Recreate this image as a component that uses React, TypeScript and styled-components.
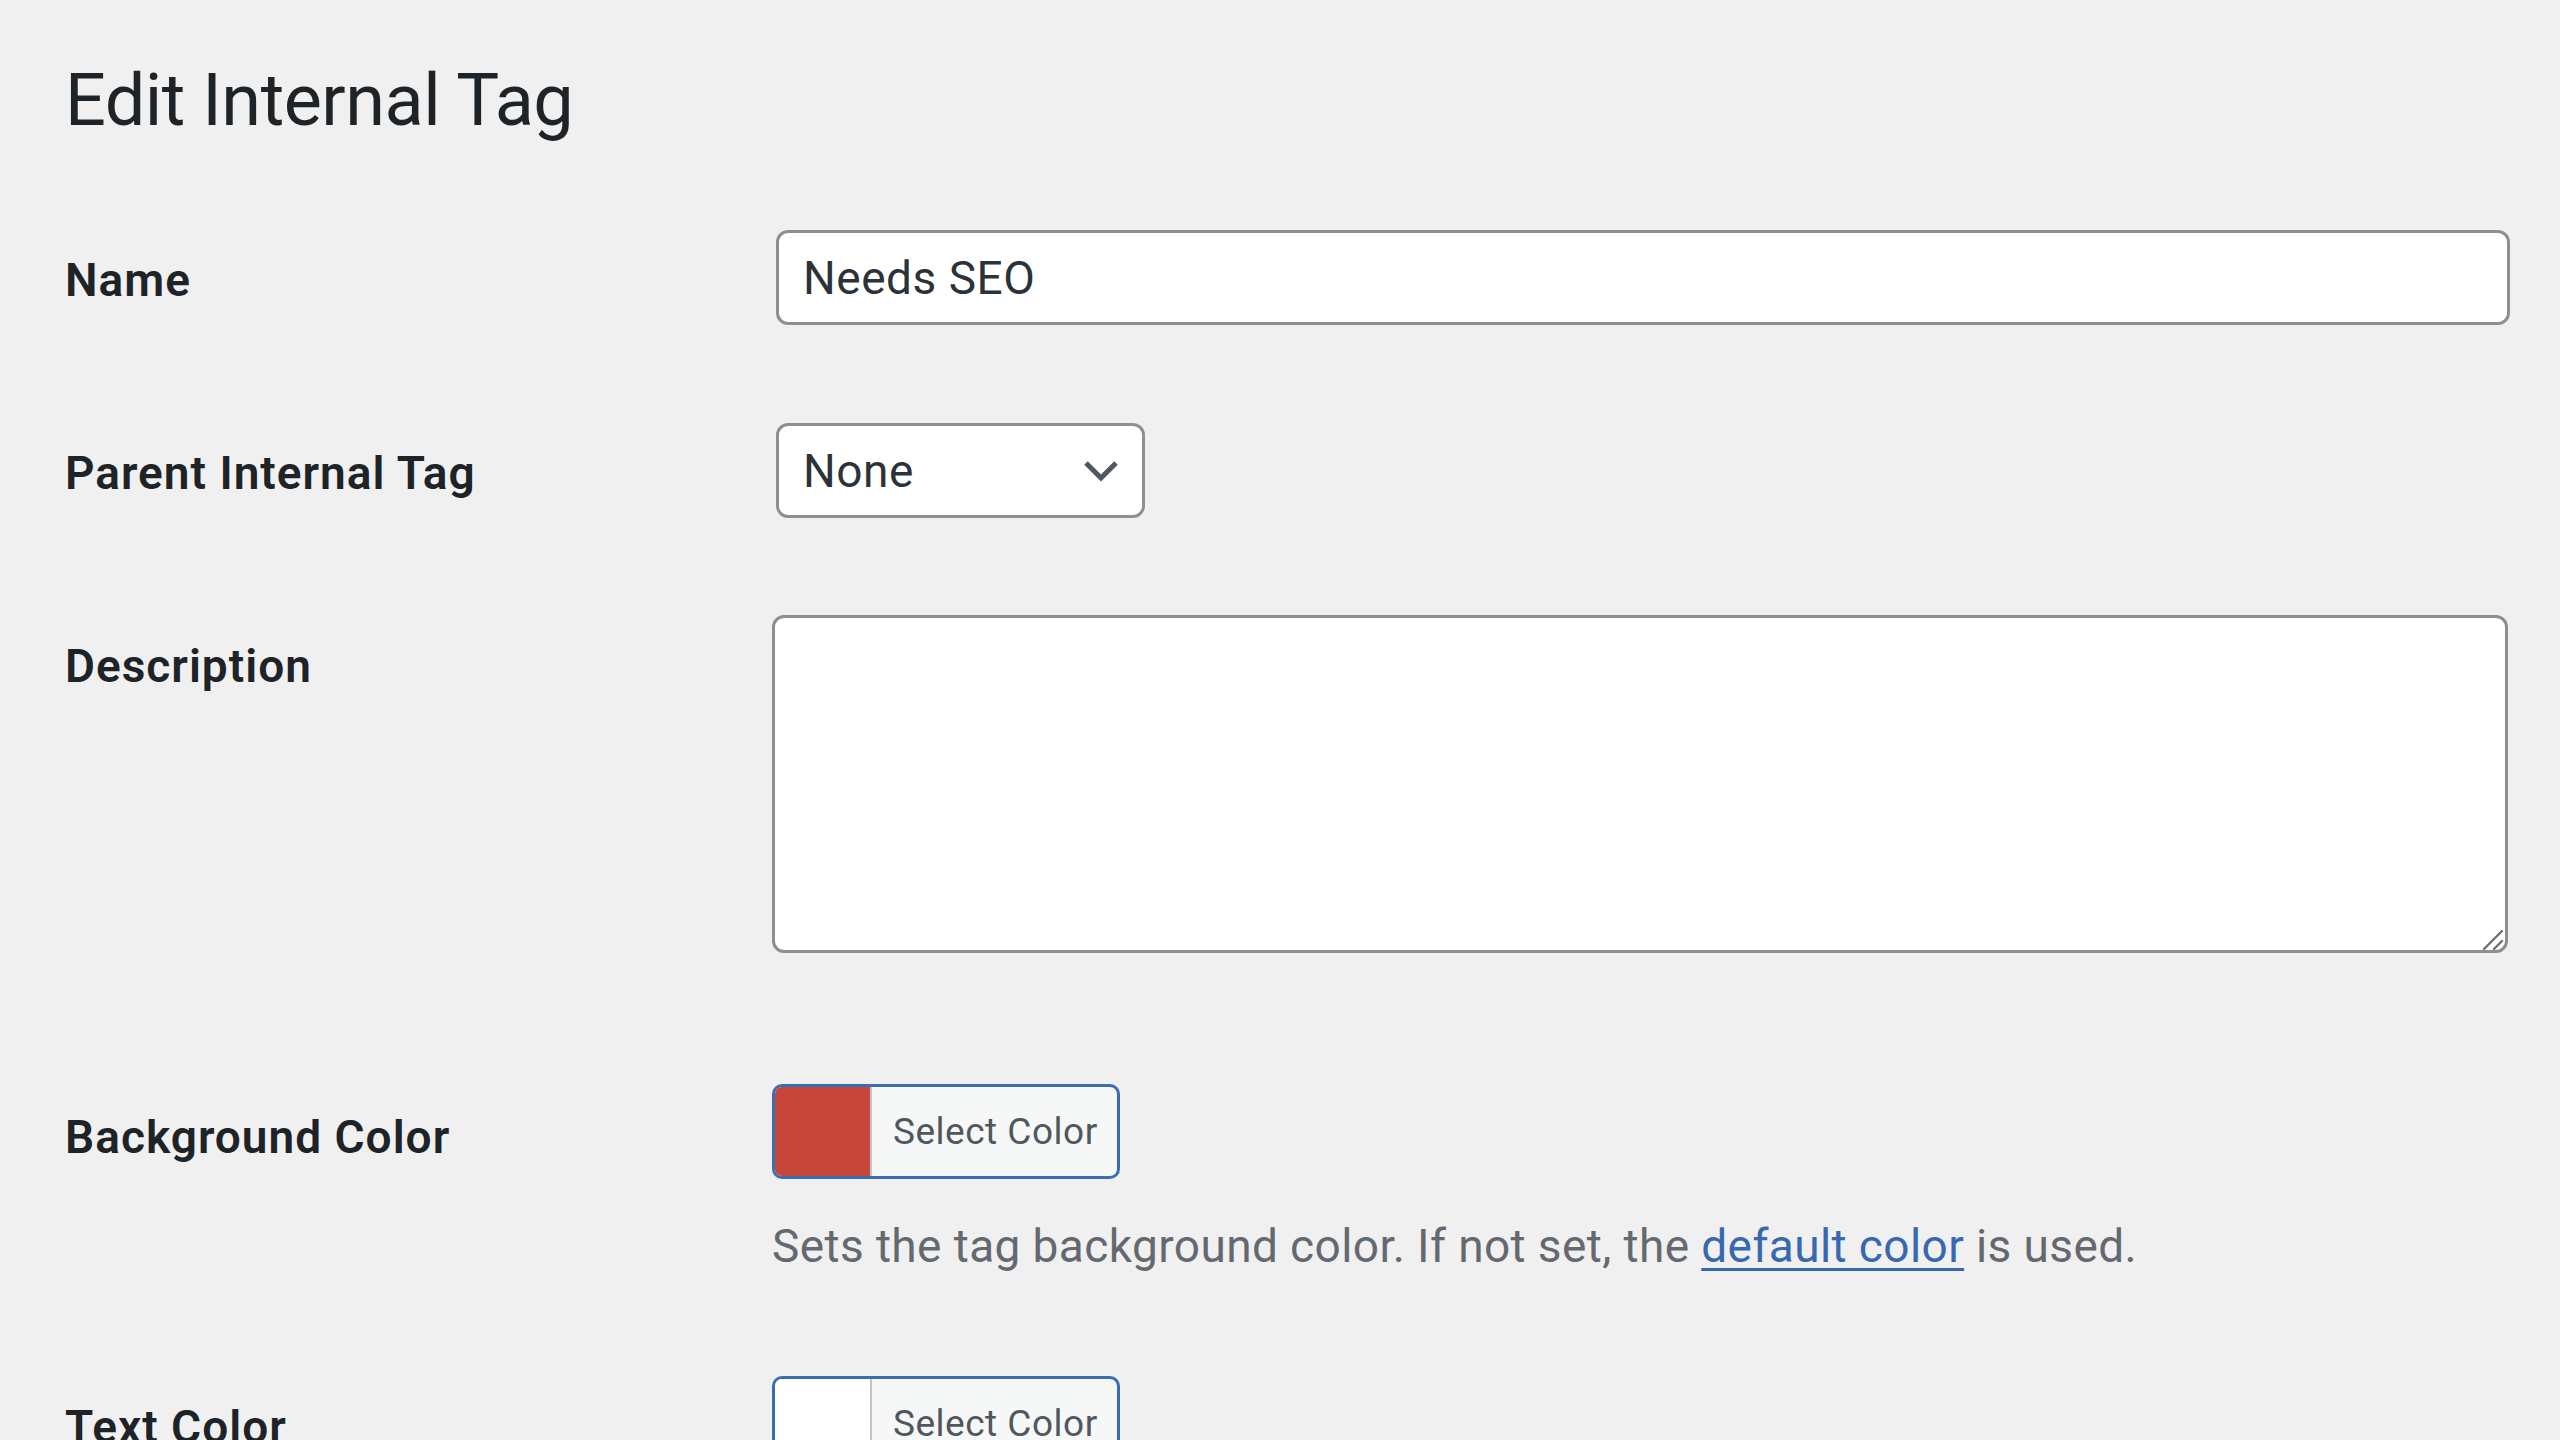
import React from "react";
import styled, { createGlobalStyle } from "styled-components";

const GlobalStyle = createGlobalStyle`
  html, body {
    margin: 0;
    padding: 0;
    background: #f0f0f1;
    overflow: hidden;
  }
  body {
    font-family: Roboto, "Noto Sans", "Liberation Sans", sans-serif;
    color: #1d2327;
  }
  * { box-sizing: border-box; }
`;

const Page = styled.div`
  width: 2560px;
  height: 1440px;
  padding-left: 65px;
  background: #f0f0f1;
  overflow: hidden;
`;

const Title = styled.h1`
  margin: 59px 0 38px;
  font-size: 72px;
  line-height: 84px;
  font-weight: 400;
  letter-spacing: -0.5px;
  color: #1d2327;
`;

const Form = styled.div`
  display: flex;
  flex-direction: column;
`;

const Row = styled.div<{ $extraTop?: number }>`
  display: grid;
  grid-template-columns: 707px 1fr;
  margin-top: ${(p) => p.$extraTop ?? 0}px;
`;

const Label = styled.label`
  padding-top: 65px;
  font-size: 46px;
  line-height: 68px;
  font-weight: 600;
  letter-spacing: 1px;
  color: #1d2327;
`;

const Field = styled.div<{ $top?: number }>`
  padding: ${(p) => p.$top ?? 49}px 0 49px;
  display: flex;
  flex-direction: column;
  align-items: flex-start;
`;

const TextInput = styled.input`
  margin-left: 4px;
  width: 1734px;
  height: 95px;
  padding: 0 24px;
  border: 3px solid #8c8f94;
  border-radius: 12px;
  background: #fff;
  font-family: inherit;
  font-size: 46px;
  letter-spacing: 0.5px;
  color: #2c3338;
  outline: none;
`;

const SelectWrap = styled.div`
  position: relative;
  margin-left: 4px;
  width: 369px;
  height: 95px;
`;

const Select = styled.select`
  appearance: none;
  width: 100%;
  height: 100%;
  padding: 0 80px 0 24px;
  border: 3px solid #8c8f94;
  border-radius: 12px;
  background: #fff;
  font-family: inherit;
  font-size: 46px;
  letter-spacing: 0.5px;
  color: #2c3338;
  outline: none;
`;

const Chevron = styled.svg`
  position: absolute;
  right: 26px;
  top: 37px;
  width: 36px;
  height: 22px;
  pointer-events: none;
`;

const AreaWrap = styled.div`
  position: relative;
  width: 1736px;
  height: 338px;
  margin-top: -1px;
`;

const TextArea = styled.textarea`
  display: block;
  width: 100%;
  height: 100%;
  border: 3px solid #8c8f94;
  border-radius: 12px;
  background: #fff;
  resize: none;
  outline: none;
  font-family: inherit;
  font-size: 46px;
`;

const Grip = styled.svg`
  position: absolute;
  right: 4px;
  bottom: 2px;
  width: 22px;
  height: 22px;
  pointer-events: none;
`;

const ColorButton = styled.button`
  display: flex;
  align-items: stretch;
  width: 348px;
  height: 95px;
  padding: 0;
  border: 3px solid #3b6db3;
  border-radius: 10px;
  overflow: hidden;
  background: #f6f7f7;
  cursor: pointer;
`;

const Swatch = styled.span<{ $color: string }>`
  width: 95px;
  flex: none;
  background: ${(p) => p.$color};
`;

const ButtonText = styled.span`
  flex: 1;
  display: flex;
  align-items: center;
  padding-left: 21px;
  border-left: 2px solid #c3c4c7;
  font-family: Roboto, "Noto Sans", sans-serif;
  font-size: 37px;
  letter-spacing: 0.5px;
  color: #50575e;
  white-space: nowrap;
`;

const Help = styled.p`
  margin: 37px 0 0;
  font-size: 46px;
  line-height: 60px;
  letter-spacing: 0.4px;
  color: #646970;
`;

const Link = styled.a`
  color: #3868b0;
  text-decoration: underline;
  text-decoration-thickness: 3px;
  text-underline-offset: 6px;
`;

export default function App() {
  return (
    <>
      <GlobalStyle />
      <Page>
        <Title>Edit Internal Tag</Title>
        <Form>
          <Row>
            <Label htmlFor="tag-name">Name</Label>
            <Field>
              <TextInput id="tag-name" defaultValue="Needs SEO" />
            </Field>
          </Row>
          <Row>
            <Label htmlFor="tag-parent">Parent Internal Tag</Label>
            <Field>
              <SelectWrap>
                <Select id="tag-parent" defaultValue="none">
                  <option value="none">None</option>
                </Select>
                <Chevron viewBox="0 0 36 22">
                  <path d="M3 3 L18 18 L33 3" fill="none" stroke="#50575e" strokeWidth="5" />
                </Chevron>
              </SelectWrap>
            </Field>
          </Row>
          <Row>
            <Label htmlFor="tag-desc">Description</Label>
            <Field>
              <AreaWrap>
                <TextArea id="tag-desc" />
                <Grip viewBox="0 0 22 22">
                  <path d="M2 20 L20 2 M12 20 L20 12" stroke="#6c7075" strokeWidth="2.4" strokeLinecap="round" />
                </Grip>
              </AreaWrap>
            </Field>
          </Row>
          <Row $extraTop={36}>
            <Label>Background Color</Label>
            <Field $top={46}>
              <ColorButton type="button">
                <Swatch $color="#c6463a" />
                <ButtonText>Select Color</ButtonText>
              </ColorButton>
              <Help>
                Sets the tag background color. If not set, the <Link href="#">default color</Link> is used.
              </Help>
            </Field>
          </Row>
          <Row $extraTop={3}>
            <Label>Text Color</Label>
            <Field $top={48}>
              <ColorButton type="button">
                <Swatch $color="#ffffff" />
                <ButtonText>Select Color</ButtonText>
              </ColorButton>
            </Field>
          </Row>
        </Form>
      </Page>
    </>
  );
}
